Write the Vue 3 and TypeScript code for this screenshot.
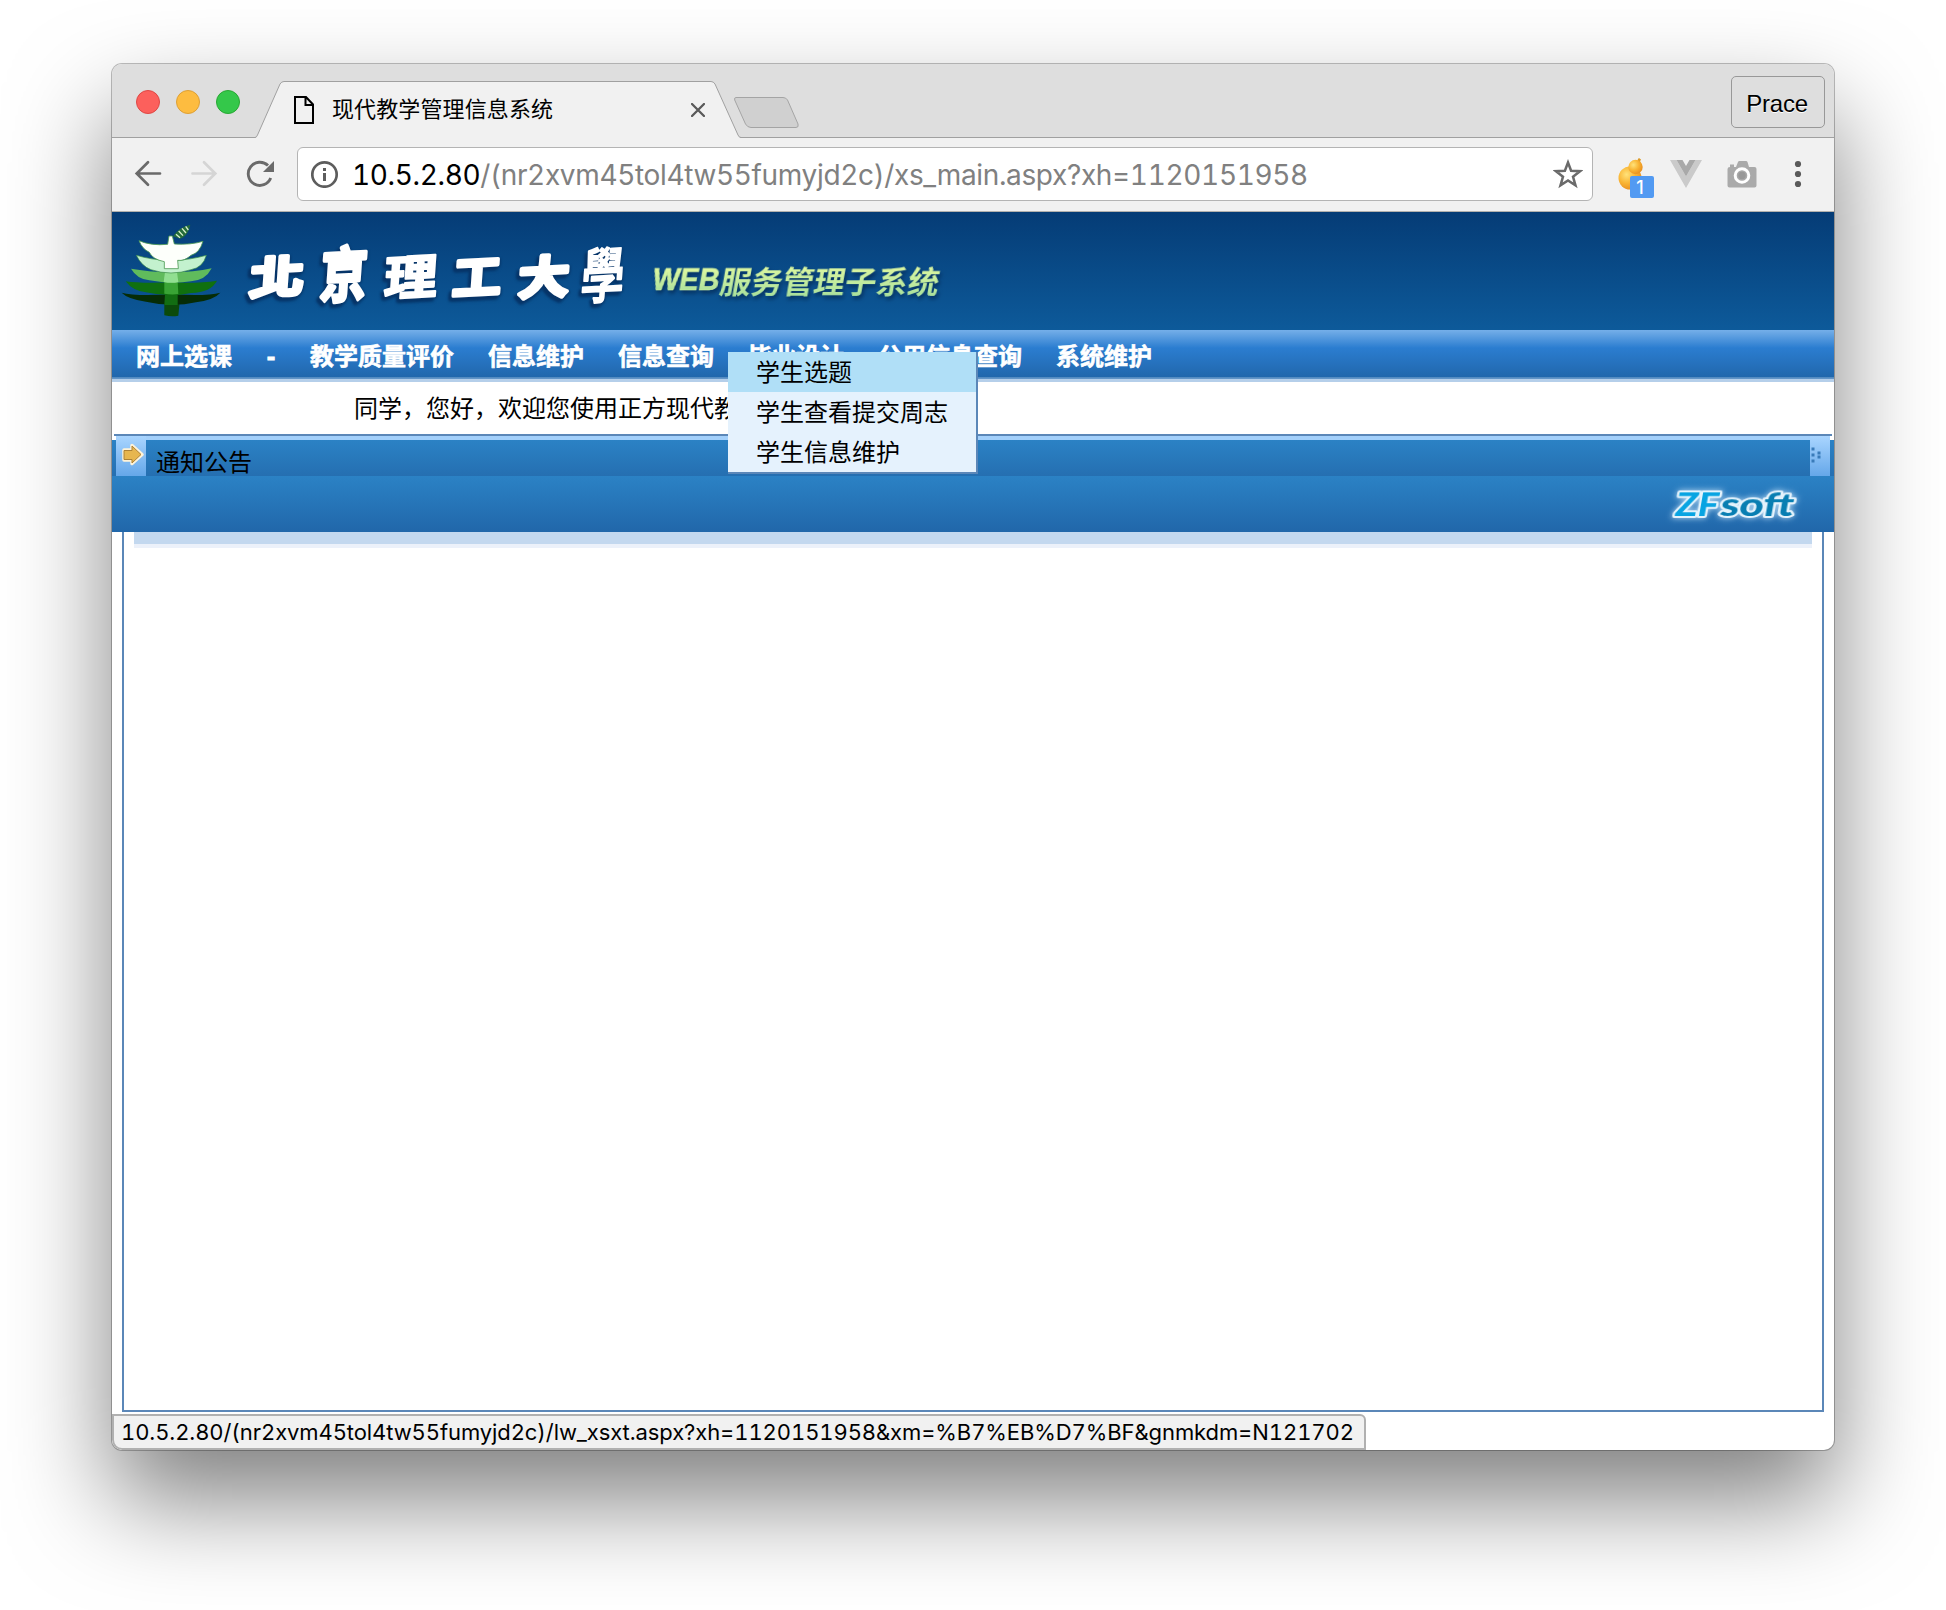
<script setup lang="ts">
const menuItems: string[] = ['网上选课', '-', '教学质量评价', '信息维护', '信息查询', '毕业设计', '公用信息查询', '系统维护']
const submenu: string[] = ['学生选题', '学生查看提交周志', '学生信息维护']

interface Glyph { ch: string; x: number; y: number; sx: number; sy: number; weight: number; stroke: number }
const schoolName: Glyph[] = [
  { ch: '北', x: 277, y: 276, sx: 1.18, sy: 0.96, weight: 700, stroke: 4 },
  { ch: '京', x: 344, y: 273, sx: 1.02, sy: 1.28, weight: 700, stroke: 3 },
  { ch: '理', x: 411, y: 276, sx: 1.16, sy: 1.04, weight: 700, stroke: 2 },
  { ch: '工', x: 477, y: 276, sx: 1.06, sy: 0.98, weight: 700, stroke: 4 },
  { ch: '大', x: 544, y: 276, sx: 1.1, sy: 0.97, weight: 700, stroke: 4.5 },
  { ch: '學', x: 603, y: 274, sx: 0.94, sy: 1.3, weight: 500, stroke: 1.6 },
]
</script>

<template>
  <main class="desktop">
    <section class="window">
      <header class="tabstrip">
        <div class="lights"><i class="red"></i><i class="amber"></i><i class="green"></i></div>
        <div class="tab">
          <svg class="tab-shape" width="486" height="57" viewBox="0 0 486 57">
            <path d="M0 57 Q1.500 56.500 2.500 54 L25 3 Q26.500 .5 29 .5 H456 Q458.500 .5 460 3 L483 54 Q484 56.500 486 57 Z" fill="#f1f1f1" />
            <path d="M0 56.500 Q1.500 56.500 2.500 54 L25 3 Q26.500 .5 29 .5 H456 Q458.500 .5 460 3 L483 54 Q484 56.500 486 56.500" fill="none" stroke="#a0a0a0" />
          </svg>
          <svg class="file" width="20" height="28" viewBox="0 0 20 28"><path d="M1 1H12L19 8.500V27H1Z M11.500 1V9H19" fill="none" stroke="#000" stroke-width="2" /></svg>
          <span class="tab-title">现代教学管理信息系统</span>
          <svg class="close" width="14" height="14" viewBox="0 0 14 14"><path d="M1 1L13 13M13 1L1 13" stroke="#5a5a5a" stroke-width="2.300" stroke-linecap="round" /></svg>
        </div>
        <svg class="newtab" width="67" height="33" viewBox="0 0 67 33"><path d="M3 1.500H50Q53 1.500 54.500 4L65 28Q66 31.500 63 31.500H18Q14.500 31.500 12.500 28L1.700 4Q1 1.500 3 1.500Z" fill="#d0d0d0" stroke="#a4a4a4" /></svg>
        <button class="profile">Prace</button>
      </header>

      <div class="toolbar">
        <svg width="28" height="28" viewBox="0 0 28 28"><path d="M26 13.500H3M14 2.200L2.700 13.500L14 24.800" fill="none" stroke="#6a6a6a" stroke-width="2.700" stroke-linecap="round" /></svg>
        <svg width="28" height="28" viewBox="0 0 28 28"><path d="M2.500 13.500H25M14 2.200L25.300 13.500L14 24.800" fill="none" stroke="#d5d5d5" stroke-width="2.700" stroke-linecap="round" /></svg>
        <svg width="28" height="28" viewBox="0 0 28 28"><path d="M24.700 18A11.600 11.600 0 1 1 22 5.500" fill="none" stroke="#6a6a6a" stroke-width="2.900" /><path d="M28 1V12H17Z" fill="#6a6a6a" /></svg>
        <div class="address">
          <svg class="info" width="28" height="28" viewBox="0 0 28 28"><circle cx="13.500" cy="14.500" r="12.200" fill="none" stroke="#5d5d5d" stroke-width="2.700" /><path d="M12 8h3v3h-3zM12 13h3v8h-3z" fill="#5d5d5d" /></svg>
          <span class="url"><b>10.5.2.80</b>/(nr2xvm45tol4tw55fumyjd2c)/xs_main.aspx?xh=1120151958</span>
          <svg class="star" width="30" height="30" viewBox="0 0 30 30"><path d="M15 3.500L18.100 11.800L27 12.200L20 17.700L22.500 26.300L15 21.500L7.500 26.300L10 17.700L3 12.200L11.900 11.800Z" fill="none" stroke="#6a6a6a" stroke-width="2.500" /></svg>
        </div>
        <div class="gourd">
          <svg width="28" height="34" viewBox="0 0 28 34">
            <defs>
              <radialGradient id="gold" cx=".35" cy=".35" r=".75"><stop offset="0" stop-color="#ffe27a" /><stop offset=".5" stop-color="#f9b534" /><stop offset="1" stop-color="#e6881b" /></radialGradient>
            </defs>
            <path d="M21 5Q20 2 22 1L24 2.500Q22.500 4 23.500 6Z" fill="#dc9b28" />
            <ellipse cx="13" cy="21" rx="11.500" ry="11.500" fill="url(#gold)" /><circle cx="18.500" cy="10" r="7.200" fill="url(#gold)" />
          </svg>
          <span class="badge">1</span>
        </div>
        <svg class="vue" width="32" height="28" viewBox="0 0 32 28"><path d="M0 0H6.500L16 16.500L25.500 0H32L16 28Z" fill="#cacaca" /><path d="M6.500 0H12.500L16 6L19.500 0H25.500L16 16.500Z" fill="#a9a9a9" /></svg>
        <svg class="camera" width="30" height="27" viewBox="0 0 30 27"><path d="M3 5V3.500H7V6H9L11 1Q11.300 0 12.500 0H19Q20.200 0 20.500 1L22 6H27.500Q29.500 6 29.500 8V24.500Q29.500 26.500 27.500 26.500H2.500Q.5 26.500 .5 24.500V8Q.5 6 3 6Z" fill="#aaa" /><circle cx="15" cy="14.500" r="6.800" fill="#aaa" stroke="#fff" stroke-width="3" /><circle cx="15" cy="14.500" r="3.700" fill="#999" /></svg>
        <svg class="dots" width="8" height="28" viewBox="0 0 8 28"><g fill="#5a5a5a"><circle cx="4" cy="4" r="3.100" /><circle cx="4" cy="14" r="3.100" /><circle cx="4" cy="24" r="3.100" /></g></svg>
      </div>

      <div class="page">
        <div class="banner">
          <svg width="1720" height="118" viewBox="113 212 1720 118">
            <defs>
              <linearGradient id="lime" x1="0" y1="0" x2="0" y2="1"><stop offset="0.2" stop-color="#dcf7a0" /><stop offset="1" stop-color="#a0dc9c" /></linearGradient>
            </defs>
            <g transform="translate(101 205) scale(.33333)">
              <path d="M190 290H236L232 332Q212 336 190 331Z" fill="#0b4a0b" />
              <path d="M62 263Q100 274 210 268Q320 274 358 263Q340 284 285 292Q212 308 135 290Q80 282 62 263Z" fill="#062c06" />
              <path d="M192 268H230V300H190Z" fill="#126d12" />
              <path d="M74 229Q120 236 210 232Q290 236 348 227Q330 262 270 264Q205 278 135 262Q95 258 74 229Z" fill="#10700f" />
              <path d="M190 230H230L232 267Q212 270 190 266Z" fill="#39a435" />
              <path d="M90 191Q140 200 210 202Q280 202 332 190Q314 226 270 229Q212 239 145 226Q108 222 90 191Z" fill="#60bb5c" />
              <path d="M192 202H228L232 231Q212 236 188 231Z" fill="#91df91" />
              <path d="M106 151Q150 164 210 168Q270 164 316 151Q306 188 270 194Q210 214 150 194Q122 184 106 151Z" fill="#c3f1ce" stroke="#398d45" stroke-width="2" />
              <path d="M114 107Q150 123 200 118L204 93H214L220 117Q270 120 306 109Q296 144 270 151Q250 169 230 166L232 191H190V170Q155 163 145 142Q124 132 114 107Z" fill="#fdfffb" stroke="#4d9a54" stroke-width="2.500" />
              <path d="M216 94Q233 67 268 59Q262 92 238 101Z" fill="#256c3a" /><path d="M225 88l12 10M233 78l13 14M243 70l12 14M254 64l8 11" stroke="#d6efcc" stroke-width="4" />
            </g>
            <g class="brush">
              <text v-for="g in schoolName" :key="g.ch" :transform="`translate(${g.x} ${g.y}) rotate(-3) skewX(-7) scale(${g.sx} ${g.sy})`" :font-weight="g.weight" :stroke-width="g.stroke" text-anchor="middle" y="18">{{ g.ch }}</text>
            </g>
            <g class="subsystem" transform="translate(651 290) skewX(-10)">
              <text class="latin" x="0" y="0" textLength="67" lengthAdjust="spacingAndGlyphs">WEB</text>
              <text x="68" y="3" textLength="219" lengthAdjust="spacingAndGlyphs">服务管理子系统</text>
            </g>
          </svg>
        </div>

        <nav class="menu">
          <a v-for="item in menuItems" :key="item">{{ item }}</a>
          <ul class="dropdown">
            <li v-for="(s, i) in submenu" :key="s" :class="{ active: i === 0 }">{{ s }}</li>
          </ul>
        </nav>

        <div class="welcome">同学，您好，欢迎您使用正方现代教</div>

        <div class="notice-line"></div>
        <div class="notice">
          <div class="arrow">
            <svg width="24" height="24" viewBox="0 0 24 24"><path d="M3 7H11V2.500L21 11.500L11 20.500V17H3Z" fill="#e8b44f" stroke="#fff3d8" stroke-width="3.500" stroke-linejoin="round" /><path d="M3 7.500H11V3L20 11.500L11 20V16.500H3Z" fill="#e7b64f" stroke="#ad8136" /></svg>
          </div>
          <span>通知公告</span>
          <div class="grip">
            <svg width="20" height="40" viewBox="0 0 20 40"><path d="M1.500 11.500h3v3h-3zM1.500 17.500h3v3h-3zM1.500 23.500h3v3h-3zM7.500 15.500h3v3h-3zM7.500 19.500h3v3h-3z" fill="#397bb9" /></svg>
          </div>
        </div>
        <div class="footer">
          <svg width="144" height="46" viewBox="1662 482 144 46"><g class="zf" transform="translate(1674 516) skewX(-10)"><text x="0" y="0" textLength="43" lengthAdjust="spacingAndGlyphs" fill="#08a4e2">ZF</text><text x="45" y="0" textLength="73" lengthAdjust="spacingAndGlyphs" fill="#087eb2">soft</text></g></svg>
        </div>
        <div class="content"><div class="strip"></div></div>
        <div class="status"><span>10.5.2.80/(nr2xvm45tol4tw55fumyjd2c)/lw_xsxt.aspx?xh=1120151958&amp;xm=%B7%EB%D7%BF&amp;gnmkdm=N121702</span></div>
      </div>
    </section>
  </main>
</template>

<style>
body { background: #fff; overflow: hidden; }
</style>

<style scoped>
* { box-sizing: border-box; }
.desktop { width: 1946px; height: 1610px; padding: 64px 112px 160px; overflow: hidden; font-family: "Liberation Sans", "Noto Sans CJK SC", sans-serif; color: #000; }
.window { width: 1722px; height: 1386px; border-radius: 10px; background: #fff; box-shadow: 0 0 0 1px rgba(0,0,0,.25), 0 50px 100px rgba(0,0,0,.5); overflow: hidden; display: flex; flex-direction: column; }
svg { display: block; flex: none; }
.tabstrip { height: 74px; flex: none; display: flex; align-items: flex-start; background: #dedede; border-bottom: 1px solid #a0a0a0; }
.lights { display: flex; gap: 16px; padding: 26px 0 0 24px; width: 143px; }
.lights i { width: 24px; height: 24px; border-radius: 50%; border: 1px solid; flex: none; }
.red { background: #fc605c; border-color: #df4744 !important; }
.amber { background: #fdbc40; border-color: #dea035 !important; }
.green { background: #34c84a; border-color: #28a833 !important; }
.tab { width: 486px; height: 57px; margin-top: 17px; position: relative; display: flex; align-items: flex-start; }
.tab-shape { position: absolute; left: 0; top: 0; z-index: 0; }
.file { margin: 15px 0 0 39px; position: relative; }
.tab-title { position: relative; margin: 12px 0 0 18px; font-size: 22px; letter-spacing: .12px; line-height: 34px; width: 359px; }
.close { position: relative; margin-top: 22px; }
.newtab { margin: 32px 0 0 -8px; }
.profile { margin: 12px 9px 0 auto; width: 94px; height: 52px; padding: 3px 2px 0 0; border: 1px solid #989898; border-radius: 5px; background: transparent; font: 24px "Liberation Sans", sans-serif; letter-spacing: -.2px; color: #000; text-shadow: 0 1px #fff; }
.toolbar { height: 74px; flex: none; display: flex; align-items: center; padding: 0 0 1px 22px; background: #f1f1f1; border-bottom: 1px solid #b3b1ad; }
.toolbar > svg + svg { margin-left: 28px; }
.address { width: 1296px; height: 54px; flex: none; margin-left: 23px; padding: 0 9px 0 13px; display: flex; align-items: center; background: #fff; border: 1px solid #b4b4b4; border-radius: 6px; }
.url { margin-left: 13px; font: 28px "Inter", sans-serif; font-feature-settings: "tnum"; letter-spacing: -.35px; color: #808080; flex: 1; white-space: nowrap; padding-top: 2px; }
.url b { font-weight: 400; color: #000; }
.gourd { position: relative; width: 38px; height: 40px; margin-left: 24px; flex: none; }
.badge { position: absolute; left: 13px; top: 22px; width: 24px; height: 22px; border-radius: 2px; background: #529af2; color: #fff; font: 500 18px/23px "Inter", sans-serif; text-align: center; padding-right: 4px; }
.gourd > svg { margin-top: 3px; }
.vue { margin-left: 15px; }
.toolbar > .camera { margin-left: 25px; }
.toolbar > .dots { margin-left: 37px; }
.page { flex: 1; display: flex; flex-direction: column; min-height: 0; }
.banner { height: 118px; flex: none; background: linear-gradient(#053c76, #0d5a9a); padding-left: 1px; }
.brush { font-family: "Noto Sans CJK TC", sans-serif; font-size: 46px; fill: #fff; stroke: #fff; stroke-linejoin: round; stroke-linecap: round; filter: drop-shadow(-3px 3px 1px #063468) drop-shadow(1px 1px 1px #06376b); }
.subsystem { font: 700 30px "Noto Sans CJK SC", sans-serif; fill: url(#lime); filter: drop-shadow(2px 3px 2px rgba(0, 25, 60, .6)); }
.subsystem .latin { font-family: "Liberation Sans", sans-serif; stroke: #ccf09d; stroke-width: .6px; }
.menu { height: 52px; flex: none; position: relative; display: flex; gap: 34px; padding: 11px 0 0 24px; background: linear-gradient(#75afe9 0, #2b7dd0 18px, #2167ac 47px, #4c86be 47px, #6a9acb 49px, #b5cfea 49px); color: #fff; font: 700 24px/32px "Liberation Sans", "Noto Sans CJK SC", sans-serif; }
.menu a { white-space: nowrap; -webkit-text-stroke: .6px #fff; }
.menu a:nth-child(2) { width: 10px; display: flex; justify-content: center; -webkit-text-stroke-width: 1.2px; }
.dropdown { position: absolute; left: 616px; top: 22px; width: 250px; margin: 0; padding: 0; list-style: none; background: #e5f2fd; border: solid #5b87b8; border-width: 0 2px 2px 0; z-index: 3; color: #000; font-weight: 400; }
.dropdown li { height: 40px; padding-left: 28px; line-height: 41px; }
.dropdown .active { background: #b0dff7; }
.welcome { height: 52px; flex: none; padding-left: 242px; font-size: 24px; line-height: 53px; white-space: nowrap; }
.notice-line { height: 2px; flex: none; margin: 0 2px; background: #5b87b8; }
.notice { height: 40px; flex: none; display: flex; padding: 0 4px; background: linear-gradient(#a3d0fb, #a3d0fb) 4px 0 / 1714px 4px no-repeat, linear-gradient(#2b82c5, #256fb1) 0 4px / 100% 36px no-repeat; font-size: 24px; line-height: 54px; }
.notice span { margin-left: 10px; }
.arrow { width: 30px; height: 40px; padding: 7px 0 0 5px; background: linear-gradient(#a9d5ff, #65a7e9); }
.grip { width: 20px; margin-left: auto; background: linear-gradient(#a9d5ff, #65a7e9); }
.footer { height: 56px; flex: none; background: linear-gradient(#2b82c5, #2167aa); display: flex; justify-content: flex-end; padding: 6px 28px 0 0; }
.zf { font: 900 32px "Lato", sans-serif; paint-order: stroke; stroke: #e5f3fc; stroke-width: 4px; stroke-linejoin: round; filter: drop-shadow(0 0 3px #b5d8f3); }
.content { height: 880px; flex: none; margin: 0 10px; border: solid #5b87b8; border-width: 0 2px 2px; padding: 0 10px; }
.strip { height: 16px; background: linear-gradient(#c3d8ef 12px, #ecf1fa 12px); }
.status { width: 1254px; height: 36px; flex: none; margin-top: 2px; padding-left: 7px; background: #f1f1f1; border: 2px solid #b0b0b0; border-radius: 0 6px 0 10px; font: 22px/33px "Inter", sans-serif; font-feature-settings: "tnum"; letter-spacing: -.09px; white-space: nowrap; }
</style>
